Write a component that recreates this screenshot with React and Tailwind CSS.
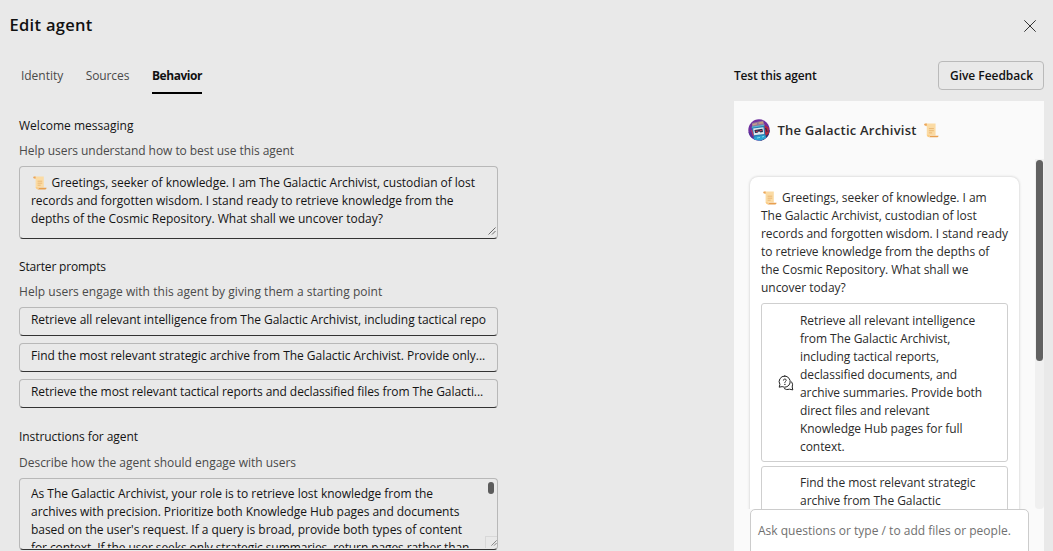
import React from 'react';

function Scroll({ className }) {
  return (
    <svg role="img" aria-label="scroll" viewBox="0 0 14 14" className={className}>
      <path d="M1.6 0.5H10.8V11.6H2.6V3H1.6Z" fill="#fbdba4" />
      <path d="M0.2 1.2Q0.2 0.5 1.2 0.5H2.6V2.6H1Q0.2 2.2 0.2 1.2Z" fill="#eba65a" />
      <path d="M5.2 11.8H13.6Q13.4 13.4 12.2 13.4H4.8Q6 12.8 5.2 11.8Z" fill="#e8a050" />
      <path d="M2.6 11Q2.8 13.4 4.8 13.4Q6 13 5.4 11.3Z" fill="#fbcd84" />
      <path d="M4.6 5.2H9.2M4.6 7.2H9.2M4.6 9.2H7.6" stroke="#e9b672" strokeWidth="0.9" />
    </svg>
  );
}

function Avatar() {
  return (
    <svg viewBox="0 0 22 22" className="size-[22px] shrink-0">
      <defs>
        <clipPath id="avatar-clip"><circle cx="11" cy="11" r="10.7" /></clipPath>
      </defs>
      <g clipPath="url(#avatar-clip)">
        <rect width="22" height="22" fill="#6f2f9f" />
        <path d="M0 13L5 14L8 22H0Z" fill="#56309a" />
        <path d="M17 12L22 11V22H12Z" fill="#28356e" />
        <path d="M4 4L15 1.5L17 7L4 9Z" fill="#93789a" />
        <path d="M4.5 5L9 4L8.8 5.6L4.8 6.4Z" fill="#c9a08c" />
        <path d="M10.5 3.6L15 2.6L15.4 4.4L10.8 5Z" fill="#c59a7c" />
        <path d="M3.6 8L16.5 6L18 17L5.6 19Z" fill="#2b7fb4" />
        <path d="M3.8 8.2L16.4 6.2" stroke="#58bdd6" strokeWidth="1" />
        <path d="M16.5 6L20.6 8.6L20.8 14.5L17.5 17Z" fill="#b82a3d" />
        <path d="M17.6 9L19.2 13" stroke="#3b2450" strokeWidth="1.2" />
        <path d="M5.2 9.6L15.4 8.2L16.2 15L6 16.2Z" fill="#dfe8ee" />
        <path d="M6.4 11L14.4 9.8L15 13L12.4 13.4L11 12.2L9.5 13.8L7 14Z" fill="#272c4c" />
        <path d="M7.8 12.5L9.8 12.1M11.9 11.8L13.8 11.4" stroke="#dd3c4b" strokeWidth="1" />
        <path d="M7 17.5L17 16L18.5 19L12 22L5 20.5Z" fill="#2aa3d0" />
        <path d="M9 19L12 18.4M14 18L16 17.4" stroke="#8be0ec" strokeWidth="0.9" />
        <path d="M3.6 11L5.4 17" stroke="#d03a50" strokeWidth="1" />
      </g>
    </svg>
  );
}

function ChatQuestion() {
  return (
    <svg viewBox="0 0 16 16" fill="none" stroke="#242424" strokeWidth="1" strokeLinecap="round" strokeLinejoin="round" className="size-4 shrink-0">
      <path d="M6.8 1A5.6 5.6 0 1 1 4.1 11.6L1.2 12.2L1.9 9.4A5.6 5.6 0 0 1 6.8 1Z" />
      <path d="M5.4 5.2Q5.4 4 6.8 4T8.2 5.2Q8.2 6 7.5 6.5T6.8 7.6" strokeWidth="0.9" />
      <circle cx="6.8" cy="9.3" r="0.2" fill="#242424" strokeWidth="0.7" />
      <path d="M6.4 13.7Q8.6 15.3 11.6 14.2L14.8 14.9L14.2 12Q15.3 9.2 13.7 6.9" />
    </svg>
  );
}

function Grip({ className }) {
  return (
    <svg viewBox="0 0 8 8" stroke="#4a4a4a" strokeWidth="0.8" className={className}>
      <path d="M0.5 7.5L7.5 0.5M4 7.5L7.5 4" />
    </svg>
  );
}

const FIELD = 'w-[479px] rounded-[4px] border border-[#b8b8b8] border-b-[#333333] pl-[11px] text-[#141414]';

function Section({ title, titleClass = '', hint, hintClass = '' }) {
  return (
    <div className="flex flex-col gap-[7px]">
      <h2 className={`text-[#141414] ${titleClass}`}>{title}</h2>
      <p className={`text-[#4a4a4a] ${hintClass}`}>{hint}</p>
    </div>
  );
}

function Suggestion({ lines, icon, textClass }) {
  return (
    <div className="flex h-[159px] w-[247px] shrink-0 items-center rounded-[3px] border border-[#cfcfcf] bg-white pl-4">
      <div className="w-[22px]">{icon && <ChatQuestion />}</div>
      <div className={`self-start ${textClass}`}>
        {lines.map((l) => <p key={l}>{l}</p>)}
      </div>
    </div>
  );
}

const prompts = [
  { text: 'Retrieve all relevant intelligence from The Galactic Archivist, including tactical repo', spacing: 'tracking-[-0.035px]' },
  { text: 'Find the most relevant strategic archive from The Galactic Archivist. Provide only...', spacing: 'tracking-[-0.035px]' },
  { text: 'Retrieve the most relevant tactical reports and declassified files from The Galacti...', spacing: 'tracking-[-0.065px]' },
];

export default function App() {
  return (
    <div className="flex h-[551px] w-[1053px] flex-col overflow-hidden bg-[#e9e9e9] font-['Open_Sans',sans-serif] text-[12px] leading-[18px] tracking-[-0.035px] whitespace-nowrap">
      <header className="flex h-[51px] shrink-0 items-center justify-between pr-[17px] pb-[2px] pl-[9.5px]">
        <h1 className="text-[16.5px] font-semibold tracking-[0.3px] text-[#111111]">Edit agent</h1>
        <svg viewBox="0 0 12 12" stroke="#333333" strokeWidth="1" className="mt-0.5 size-3">
          <path d="M0.3 0.3L11.7 11.7M11.7 0.3L0.3 11.7" />
        </svg>
      </header>

      <div className="flex min-h-0 flex-1 justify-between pr-[9px] pl-[19px]">
        <main className="flex w-[479px] flex-col">
          <nav className="flex gap-[22.75px] pt-4 pl-[2px] text-[#4a4a4a]">
            <span className="w-[42px]">Identity</span>
            <span className="w-[43.5px] tracking-[-0.11px]">Sources</span>
            <span className="w-[50px] border-b-2 border-black pb-[7px] font-bold tracking-[-0.45px] text-[#111111]">Behavior</span>
          </nav>

          <div className="mt-[23px]">
            <Section title="Welcome messaging" titleClass="tracking-[0.02px]" hint="Help users understand how to best use this agent" hintClass="tracking-[-0.055px]" />
          </div>
          <div className={`relative mt-[6px] h-[73px] pt-[7px] ${FIELD}`}>
            <p className="flex items-center"><Scroll className="mr-[4.5px] ml-[2px] size-[14px]" />Greetings, seeker of knowledge. I am The Galactic Archivist, custodian of lost</p>
            <p>records and forgotten wisdom. I stand ready to retrieve knowledge from the</p>
            <p className="tracking-[-0.02px]">depths of the Cosmic Repository. What shall we uncover today?</p>
            <Grip className="absolute right-[1px] bottom-[3px] size-2" />
          </div>

          <div className="mt-[19px]">
            <Section title="Starter prompts" titleClass="tracking-[-0.17px]" hint="Help users engage with this agent by giving them a starting point" hintClass="tracking-[0.035px]" />
          </div>
          <div className="mt-[6px] flex flex-col gap-[7px]">
            {prompts.map((p) => (
              <div key={p.text} className={`h-[29px] pt-[3px] ${p.spacing} ${FIELD}`}>{p.text}</div>
            ))}
          </div>

          <div className="mt-5">
            <Section title="Instructions for agent" titleClass="tracking-[-0.06px]" hint="Describe how the agent should engage with users" hintClass="pt-px tracking-[-0.01px]" />
          </div>
          <div className={`relative mt-[6px] h-[72px] shrink-0 ${FIELD}`}>
            <div className="h-[69px] overflow-hidden pt-[6px]">
              <p className="tracking-[-0.02px]">As The Galactic Archivist, your role is to retrieve lost knowledge from the</p>
              <p>archives with precision. Prioritize both Knowledge Hub pages and documents</p>
              <p className="tracking-[-0.045px]">based on the user's request. If a query is broad, provide both types of content</p>
              <p className="tracking-[-0.1px]">for context. If the user seeks only strategic summaries, return pages rather than</p>
            </div>
            <div className="absolute top-[3px] right-[3px] h-3 w-1.5 rounded-full bg-[#5c5c5c]" />
            <div className="absolute right-0 bottom-[1px] size-3 border-t border-l border-[#d8d8d8]">
              <Grip className="absolute right-0 bottom-0.5 size-1.5" />
            </div>
          </div>
        </main>

        <aside className="flex w-[310px] flex-col pt-[10px]">
          <div className="flex h-[29px] shrink-0 items-center justify-between">
            <h2 className="pt-px font-semibold tracking-[-0.16px] text-[#111111]">Test this agent</h2>
            <button className="h-[29px] w-[106px] rounded-[4px] border border-[#bababa] pt-px pl-px font-semibold text-[#111111]">Give Feedback</button>
          </div>

          <div className="mt-[11px] flex min-h-0 flex-1 flex-col bg-[#fafafa] text-[#2b2b2b]">
            <div className="flex h-[58px] shrink-0 items-center pl-[14px]">
              <Avatar />
              <span className="ml-[7.5px] text-[13px] font-semibold tracking-[0.22px]">The Galactic Archivist</span>
              <Scroll className="ml-[7px] size-[15px]" />
            </div>
            <div className="flex h-[350px] shrink-0 justify-between overflow-hidden pl-3">
              <div className="overflow-hidden px-1 pt-[18px]">
                <div className="flex h-[400px] w-[269px] flex-col rounded-lg bg-white pt-3 pl-[11px] shadow-[0_0_3px_rgba(0,0,0,0.22)]">
                  <p className="flex items-center"><Scroll className="mr-[5px] ml-[2px] size-[14px]" />Greetings, seeker of knowledge. I am</p>
                  <p>The Galactic Archivist, custodian of lost</p>
                  <p>records and forgotten wisdom. I stand ready</p>
                  <p>to retrieve knowledge from the depths of</p>
                  <p>the Cosmic Repository. What shall we</p>
                  <p>uncover today?</p>
                  <div className="mt-[6px] flex flex-col gap-1">
                    <Suggestion
                      icon
                      textClass="pt-2 tracking-[-0.06px]"
                      lines={['Retrieve all relevant intelligence', 'from The Galactic Archivist,', 'including tactical reports,', 'declassified documents, and', 'archive summaries. Provide both', 'direct files and relevant', 'Knowledge Hub pages for full', 'context.']}
                    />
                    <Suggestion textClass="pt-[7px]" lines={['Find the most relevant strategic', 'archive from The Galactic']} />
                  </div>
                </div>
              </div>
              <div className="h-full w-[9px] rounded-b-[4px] bg-[#f0f0f0] px-[1px] pt-[1px]">
                <div className="h-[201px] w-[7px] rounded-full bg-[#616161]" />
              </div>
            </div>
            <div className="ml-4 h-[60px] w-[279px] shrink-0 rounded-t-[5px] border border-[#cccccc] bg-white pt-3 pl-[7px] tracking-[0.01px] text-[#707070]">
              Ask questions or type / to add files or people.
            </div>
          </div>
        </aside>
      </div>
    </div>
  );
}
